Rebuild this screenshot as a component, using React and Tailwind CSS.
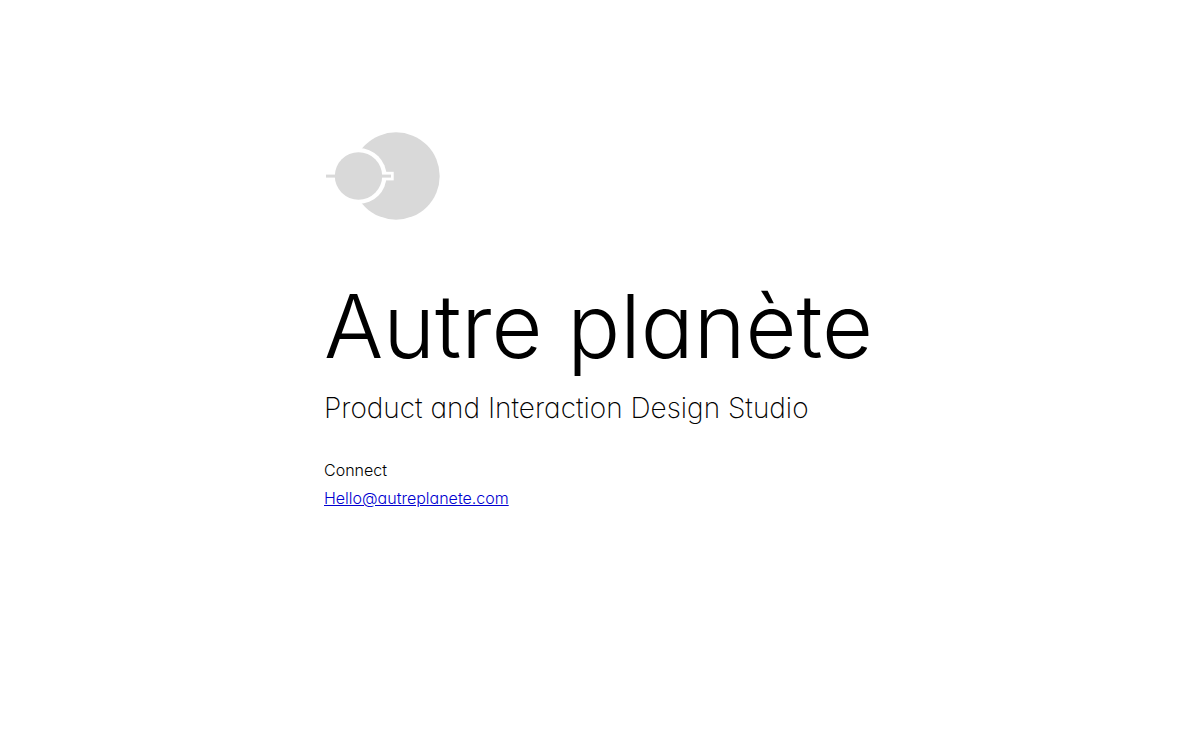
const Logo = () => (
  <svg
    viewBox="0 0 116 88"
    className="w-[116px] h-[88px]"
    role="img"
    aria-label="Autre planète"
  >
    {/* Large planet */}
    <circle cx="72" cy="44" r="43.7" fill="#d9d9d9" />
    {/* White ring and notch around the small planet */}
    <circle cx="34.5" cy="44" r="28" fill="#fff" />
    <rect x="56" y="39.8" width="13.7" height="8.6" fill="#fff" />
    {/* Small planet with its axis */}
    <circle cx="34.5" cy="44" r="23.7" fill="#d9d9d9" />
    <rect x="2" y="42.6" width="65" height="3" fill="#d9d9d9" />
  </svg>
);

const App = () => {
  return (
    <div className="min-h-screen bg-white px-6 pt-33 pb-16 font-['Inter','Liberation_Sans',sans-serif] [font-feature-settings:'cv11'] text-black">
      <main className="mx-auto max-w-[552px]">
        <Logo />

        <h1 className="mt-14 whitespace-nowrap text-[88px] leading-[100px] font-light">
          Autre planète
        </h1>
        <p className="mt-3 whitespace-nowrap text-[28px] leading-10 font-extralight">
          Product and Interaction Design Studio
        </p>

        <section className="mt-7 text-base leading-7 font-light">
          <h2>Connect</h2>
          <a
            href="mailto:Hello@autreplanete.com"
            className="text-[#0000d0] underline"
          >
            Hello@autreplanete.com
          </a>
        </section>
      </main>
    </div>
  );
};

export default App;
